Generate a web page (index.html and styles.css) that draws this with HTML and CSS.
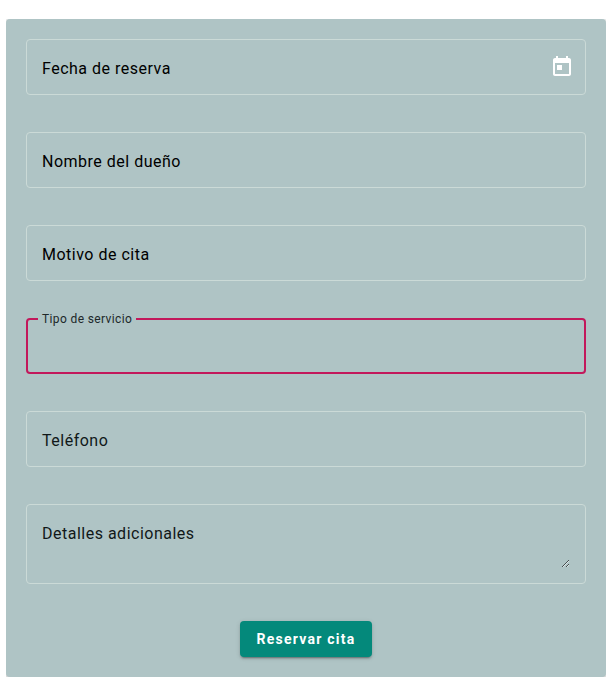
FILE: index.html
```html
<!DOCTYPE html>
<html lang="es">
<head>
  <meta charset="utf-8">
  <meta name="viewport" content="width=device-width, initial-scale=1">
  <title>Reservar cita</title>
  <link rel="stylesheet" href="styles.css">
</head>
<body>
  <form class="card">
    <div class="field">
      <label class="label" for="fecha">Fecha de reserva</label>
      <input class="control" id="fecha" type="text">
      <button class="calendar" type="button" aria-label="Abrir calendario">
        <svg viewBox="0 0 24 24" width="24" height="24" fill="currentColor" aria-hidden="true">
          <path d="M19 3h-1V1h-2v2H8V1H6v2H5c-1.11 0-1.99.9-1.99 2L3 19c0 1.1.89 2 2 2h14c1.1 0 2-.9 2-2V5c0-1.1-.9-2-2-2zm0 16H5V8h14v11zM7 10h5v5H7z"/>
        </svg>
      </button>
    </div>
    <div class="field">
      <label class="label" for="nombre">Nombre del dueño</label>
      <input class="control" id="nombre" type="text">
    </div>
    <div class="field">
      <label class="label" for="motivo">Motivo de cita</label>
      <input class="control" id="motivo" type="text">
    </div>
    <div class="field field-active">
      <label class="label label-floating" for="servicio">Tipo de servicio</label>
      <select class="control" id="servicio">
        <option value=""></option>
      </select>
    </div>
    <div class="field">
      <label class="label label-soft" for="telefono">Teléfono</label>
      <input class="control" id="telefono" type="tel">
    </div>
    <div class="field">
      <label class="label label-soft" for="detalles">Detalles adicionales</label>
      <textarea class="control control-area" id="detalles" rows="2"></textarea>
    </div>
    <button class="submit" type="submit">Reservar cita</button>
  </form>
</body>
</html>
```

FILE: styles.css
```css
* {
  box-sizing: border-box;
}

body {
  margin: 19px 4px 3px 6px;
  background: #fff;
  font-family: Roboto, "Liberation Sans", sans-serif;
}

.card {
  display: flex;
  flex-direction: column;
  gap: 37px;
  padding: 20px;
  border-radius: 4px;
  background: #afc4c5;
  box-shadow: 0 2px 12px rgba(0, 0, 0, 0.4);
}

.field {
  position: relative;
  display: flex;
  align-items: center;
  min-height: 56px;
  padding: 15px;
  border: 1px solid #cbdad7;
  border-radius: 4px;
}

.field-active {
  padding: 14px;
  border: 2px solid #c2185b;
}

.label {
  position: absolute;
  top: 17px;
  left: 15px;
  color: #000;
  font-size: 16px;
  line-height: 24px;
  letter-spacing: 0.03125em;
  pointer-events: none;
}

.label-soft {
  color: #111819;
}

.label-floating {
  top: -10px;
  left: 10px;
  padding: 0 4px;
  background: #afc4c5;
  color: #20282a;
  font-size: 12px;
  line-height: 18px;
}

.control {
  flex: 1;
  min-width: 0;
  height: 24px;
  margin: 0;
  padding: 0;
  border: 0;
  outline: 0;
  background: transparent;
  color: #000;
  font: inherit;
  font-size: 16px;
  line-height: 24px;
  appearance: none;
}

.control-area {
  height: 48px;
  resize: vertical;
}

.calendar {
  display: flex;
  margin: -4px -4px -4px 0;
  padding: 0;
  border: 0;
  background: transparent;
  color: #fff;
}

.submit {
  align-self: center;
  height: 36px;
  padding: 0 16px;
  border: 0;
  border-radius: 4px;
  background: #04897b;
  color: #fff;
  font: 700 14px/36px Roboto, "Liberation Sans", sans-serif;
  letter-spacing: 0.0892857em;
  box-shadow: 0 3px 1px -2px rgba(0, 0, 0, 0.2), 0 2px 2px rgba(0, 0, 0, 0.14), 0 1px 5px rgba(0, 0, 0, 0.12);
}
```
